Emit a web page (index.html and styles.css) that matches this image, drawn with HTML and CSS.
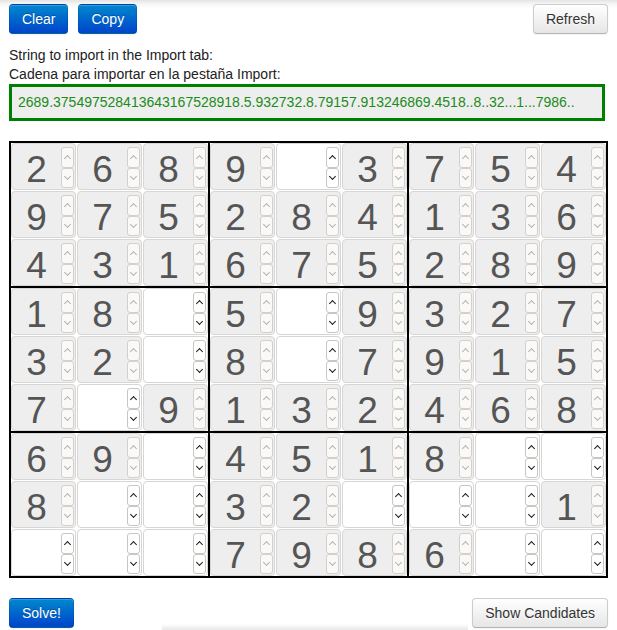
FILE: index.html
```html
<!DOCTYPE html>
<html>
<head>
<meta charset="utf-8">
<link rel="stylesheet" href="styles.css">
</head>
<body>
<div class="page">
  <div class="toolbar">
    <button class="btn btn-primary">Clear</button>
    <button class="btn btn-primary">Copy</button>
    <button class="btn btn-default push">Refresh</button>
  </div>
  <div class="label">String to import in the Import tab:<br>Cadena para importar en la pestaña Import:</div>
  <div class="export">2689.375497528413643167528918.5.932732.8.79157.913246869.4518..8..32...1...7986..</div>

  <div class="board">
    <div class="box">
      <div class="cell g"><span class="v">2</span><span class="spin"><i></i><i class="dn"></i></span></div>
      <div class="cell g"><span class="v">6</span><span class="spin"><i></i><i class="dn"></i></span></div>
      <div class="cell g"><span class="v">8</span><span class="spin"><i></i><i class="dn"></i></span></div>
      <div class="cell g"><span class="v">9</span><span class="spin"><i></i><i class="dn"></i></span></div>
      <div class="cell g"><span class="v">7</span><span class="spin"><i></i><i class="dn"></i></span></div>
      <div class="cell g"><span class="v">5</span><span class="spin"><i></i><i class="dn"></i></span></div>
      <div class="cell g"><span class="v">4</span><span class="spin"><i></i><i class="dn"></i></span></div>
      <div class="cell g"><span class="v">3</span><span class="spin"><i></i><i class="dn"></i></span></div>
      <div class="cell g"><span class="v">1</span><span class="spin"><i></i><i class="dn"></i></span></div>
    </div>
    <div class="box">
      <div class="cell g"><span class="v">9</span><span class="spin"><i></i><i class="dn"></i></span></div>
      <div class="cell e"><span class="v"></span><span class="spin"><i></i><i class="dn"></i></span></div>
      <div class="cell g"><span class="v">3</span><span class="spin"><i></i><i class="dn"></i></span></div>
      <div class="cell g"><span class="v">2</span><span class="spin"><i></i><i class="dn"></i></span></div>
      <div class="cell g"><span class="v">8</span><span class="spin"><i></i><i class="dn"></i></span></div>
      <div class="cell g"><span class="v">4</span><span class="spin"><i></i><i class="dn"></i></span></div>
      <div class="cell g"><span class="v">6</span><span class="spin"><i></i><i class="dn"></i></span></div>
      <div class="cell g"><span class="v">7</span><span class="spin"><i></i><i class="dn"></i></span></div>
      <div class="cell g"><span class="v">5</span><span class="spin"><i></i><i class="dn"></i></span></div>
    </div>
    <div class="box">
      <div class="cell g"><span class="v">7</span><span class="spin"><i></i><i class="dn"></i></span></div>
      <div class="cell g"><span class="v">5</span><span class="spin"><i></i><i class="dn"></i></span></div>
      <div class="cell g"><span class="v">4</span><span class="spin"><i></i><i class="dn"></i></span></div>
      <div class="cell g"><span class="v">1</span><span class="spin"><i></i><i class="dn"></i></span></div>
      <div class="cell g"><span class="v">3</span><span class="spin"><i></i><i class="dn"></i></span></div>
      <div class="cell g"><span class="v">6</span><span class="spin"><i></i><i class="dn"></i></span></div>
      <div class="cell g"><span class="v">2</span><span class="spin"><i></i><i class="dn"></i></span></div>
      <div class="cell g"><span class="v">8</span><span class="spin"><i></i><i class="dn"></i></span></div>
      <div class="cell g"><span class="v">9</span><span class="spin"><i></i><i class="dn"></i></span></div>
    </div>
    <div class="box">
      <div class="cell g"><span class="v">1</span><span class="spin"><i></i><i class="dn"></i></span></div>
      <div class="cell g"><span class="v">8</span><span class="spin"><i></i><i class="dn"></i></span></div>
      <div class="cell e"><span class="v"></span><span class="spin"><i></i><i class="dn"></i></span></div>
      <div class="cell g"><span class="v">3</span><span class="spin"><i></i><i class="dn"></i></span></div>
      <div class="cell g"><span class="v">2</span><span class="spin"><i></i><i class="dn"></i></span></div>
      <div class="cell e"><span class="v"></span><span class="spin"><i></i><i class="dn"></i></span></div>
      <div class="cell g"><span class="v">7</span><span class="spin"><i></i><i class="dn"></i></span></div>
      <div class="cell e"><span class="v"></span><span class="spin"><i></i><i class="dn"></i></span></div>
      <div class="cell g"><span class="v">9</span><span class="spin"><i></i><i class="dn"></i></span></div>
    </div>
    <div class="box">
      <div class="cell g"><span class="v">5</span><span class="spin"><i></i><i class="dn"></i></span></div>
      <div class="cell e"><span class="v"></span><span class="spin"><i></i><i class="dn"></i></span></div>
      <div class="cell g"><span class="v">9</span><span class="spin"><i></i><i class="dn"></i></span></div>
      <div class="cell g"><span class="v">8</span><span class="spin"><i></i><i class="dn"></i></span></div>
      <div class="cell e"><span class="v"></span><span class="spin"><i></i><i class="dn"></i></span></div>
      <div class="cell g"><span class="v">7</span><span class="spin"><i></i><i class="dn"></i></span></div>
      <div class="cell g"><span class="v">1</span><span class="spin"><i></i><i class="dn"></i></span></div>
      <div class="cell g"><span class="v">3</span><span class="spin"><i></i><i class="dn"></i></span></div>
      <div class="cell g"><span class="v">2</span><span class="spin"><i></i><i class="dn"></i></span></div>
    </div>
    <div class="box">
      <div class="cell g"><span class="v">3</span><span class="spin"><i></i><i class="dn"></i></span></div>
      <div class="cell g"><span class="v">2</span><span class="spin"><i></i><i class="dn"></i></span></div>
      <div class="cell g"><span class="v">7</span><span class="spin"><i></i><i class="dn"></i></span></div>
      <div class="cell g"><span class="v">9</span><span class="spin"><i></i><i class="dn"></i></span></div>
      <div class="cell g"><span class="v">1</span><span class="spin"><i></i><i class="dn"></i></span></div>
      <div class="cell g"><span class="v">5</span><span class="spin"><i></i><i class="dn"></i></span></div>
      <div class="cell g"><span class="v">4</span><span class="spin"><i></i><i class="dn"></i></span></div>
      <div class="cell g"><span class="v">6</span><span class="spin"><i></i><i class="dn"></i></span></div>
      <div class="cell g"><span class="v">8</span><span class="spin"><i></i><i class="dn"></i></span></div>
    </div>
    <div class="box">
      <div class="cell g"><span class="v">6</span><span class="spin"><i></i><i class="dn"></i></span></div>
      <div class="cell g"><span class="v">9</span><span class="spin"><i></i><i class="dn"></i></span></div>
      <div class="cell e"><span class="v"></span><span class="spin"><i></i><i class="dn"></i></span></div>
      <div class="cell g"><span class="v">8</span><span class="spin"><i></i><i class="dn"></i></span></div>
      <div class="cell e"><span class="v"></span><span class="spin"><i></i><i class="dn"></i></span></div>
      <div class="cell e"><span class="v"></span><span class="spin"><i></i><i class="dn"></i></span></div>
      <div class="cell e"><span class="v"></span><span class="spin"><i></i><i class="dn"></i></span></div>
      <div class="cell e"><span class="v"></span><span class="spin"><i></i><i class="dn"></i></span></div>
      <div class="cell e"><span class="v"></span><span class="spin"><i></i><i class="dn"></i></span></div>
    </div>
    <div class="box">
      <div class="cell g"><span class="v">4</span><span class="spin"><i></i><i class="dn"></i></span></div>
      <div class="cell g"><span class="v">5</span><span class="spin"><i></i><i class="dn"></i></span></div>
      <div class="cell g"><span class="v">1</span><span class="spin"><i></i><i class="dn"></i></span></div>
      <div class="cell g"><span class="v">3</span><span class="spin"><i></i><i class="dn"></i></span></div>
      <div class="cell g"><span class="v">2</span><span class="spin"><i></i><i class="dn"></i></span></div>
      <div class="cell e"><span class="v"></span><span class="spin"><i></i><i class="dn"></i></span></div>
      <div class="cell g"><span class="v">7</span><span class="spin"><i></i><i class="dn"></i></span></div>
      <div class="cell g"><span class="v">9</span><span class="spin"><i></i><i class="dn"></i></span></div>
      <div class="cell g"><span class="v">8</span><span class="spin"><i></i><i class="dn"></i></span></div>
    </div>
    <div class="box">
      <div class="cell g"><span class="v">8</span><span class="spin"><i></i><i class="dn"></i></span></div>
      <div class="cell e"><span class="v"></span><span class="spin"><i></i><i class="dn"></i></span></div>
      <div class="cell e"><span class="v"></span><span class="spin"><i></i><i class="dn"></i></span></div>
      <div class="cell e"><span class="v"></span><span class="spin"><i></i><i class="dn"></i></span></div>
      <div class="cell e"><span class="v"></span><span class="spin"><i></i><i class="dn"></i></span></div>
      <div class="cell g"><span class="v">1</span><span class="spin"><i></i><i class="dn"></i></span></div>
      <div class="cell g"><span class="v">6</span><span class="spin"><i></i><i class="dn"></i></span></div>
      <div class="cell e"><span class="v"></span><span class="spin"><i></i><i class="dn"></i></span></div>
      <div class="cell e"><span class="v"></span><span class="spin"><i></i><i class="dn"></i></span></div>
    </div>
  </div>

  <div class="footer">
    <button class="btn btn-primary">Solve!</button>
    <div class="strip"></div>
    <button class="btn btn-default push">Show Candidates</button>
  </div>
</div>
</body>
</html>
```
FILE: styles.css
```css
html, body {
  margin: 0;
  padding: 0;
}
body {
  background: #fff linear-gradient(to bottom, #e4e4e4 0, #f6f6f6 4px, #fff 8px) no-repeat;
  background-size: 100% 8px;
  font-family: "Liberation Sans", Arial, sans-serif;
  font-size: 14px;
  color: #222;
  height: 630px;
  overflow: hidden;
}
.page {
  width: 599px;
  padding: 4px 9px 0 9px;
}
.toolbar {
  display: flex;
  gap: 10px;
  align-items: flex-start;
}
.btn {
  font-family: "Liberation Sans", Arial, sans-serif;
  font-size: 14px;
  line-height: 20px;
  padding: 4px 12px;
  border-radius: 4px;
  border: 1px solid;
  cursor: pointer;
  margin: 0;
}
.toolbar .push,
.footer .push {
  margin-left: auto;
}
.btn-primary {
  color: #fff;
  text-shadow: 0 -1px 0 rgba(0,0,0,0.25);
  background-color: #006dcc;
  background-image: linear-gradient(to bottom, #0088cc, #0044cc);
  border-color: rgba(0,0,0,0.1) rgba(0,0,0,0.1) rgba(0,0,0,0.25);
  box-shadow: inset 0 1px 0 rgba(255,255,255,0.2), 0 1px 2px rgba(0,0,0,0.05);
}
.btn-default {
  color: #333;
  text-shadow: 0 1px 1px rgba(255,255,255,0.75);
  background-color: #f5f5f5;
  background-image: linear-gradient(to bottom, #ffffff, #e6e6e6);
  border-color: #cccccc #cccccc #b3b3b3;
  box-shadow: inset 0 1px 0 rgba(255,255,255,0.2), 0 1px 2px rgba(0,0,0,0.05);
}
.label {
  margin-top: 12px;
  line-height: 19px;
}
.export {
  width: 596px;
  box-sizing: border-box;
  border: 3px solid #008000;
  background: #eeeeee;
  color: #1a8c1a;
  height: 37px;
  line-height: 31px;
  padding: 0 6px;
  white-space: nowrap;
  overflow: hidden;
}
.board {
  margin-top: 20px;
  display: grid;
  grid-template-columns: repeat(3, 197px);
  gap: 2px;
  background: #000;
  border: 2px solid #000;
  width: fit-content;
}
.box {
  background: #fff;
  display: grid;
  grid-template-columns: repeat(3, 65px);
  grid-auto-rows: 47px;
  gap: 1px;
}
.cell {
  box-sizing: border-box;
  border: 1px solid #d6d6d6;
  border-radius: 4px;
  display: flex;
  background: #fff;
}
.cell.g {
  background: #eeeeee;
}
.v {
  flex: 1;
  text-align: center;
  font-family: "Liberation Sans", Arial, sans-serif;
  font-size: 37px;
  color: #555;
  line-height: 41px;
  padding-top: 5px;
}
.spin {
  width: 13px;
  margin: 3px 1px 1px 0;
  display: flex;
  flex-direction: column;
}
.spin i {
  flex: 1;
  box-sizing: border-box;
  border: 1px solid #d3cfca;
  border-radius: 3px;
  background: #faf9f7;
  display: flex;
  align-items: center;
  justify-content: center;
}
.spin i::before {
  content: "";
  width: 4px;
  height: 4px;
  border-left: 1.3px solid #b5b1ac;
  border-top: 1.3px solid #b5b1ac;
  transform: translateY(1px) rotate(45deg);
}
.spin i.dn::before {
  transform: translateY(-1px) rotate(225deg);
}
.cell.e .spin i {
  background: #fff;
  border-color: #c9c5c0;
}
.cell.e .spin i::before {
  border-color: #1a1a1a;
  border-width: 1.6px;
}
.footer {
  margin-top: 20px;
  display: flex;
  align-items: flex-start;
  height: 32px;
}
.strip {
  align-self: flex-end;
  margin-left: 88px;
  width: 306px;
  height: 6px;
  background: linear-gradient(to bottom, #ffffff, #e8e8e8);
}
```
